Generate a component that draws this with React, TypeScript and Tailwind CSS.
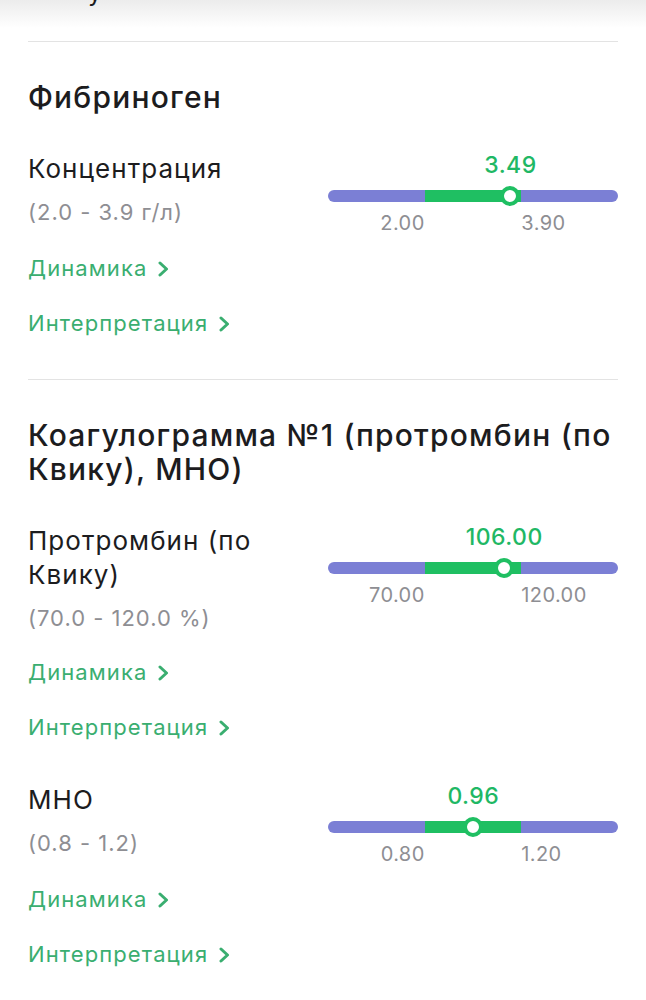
type Metric = {
  name: string;
  range: string;
  value: number;
  min: number;
  max: number;
};

type Section = {
  title: string;
  metrics: Metric[];
};

const sections: Section[] = [
  {
    title: 'Фибриноген',
    metrics: [{ name: 'Концентрация', range: '(2.0 - 3.9 г/л)', value: 3.49, min: 2, max: 3.9 }],
  },
  {
    title: 'Коагулограмма №1 (протромбин (по Квику), МНО)',
    metrics: [
      { name: 'Протромбин (по Квику)', range: '(70.0 - 120.0 %)', value: 106, min: 70, max: 120 },
      { name: 'МНО', range: '(0.8 - 1.2)', value: 0.96, min: 0.8, max: 1.2 },
    ],
  },
];

const TRACK = 290;

function RangeBar({ metric }: { metric: Metric }) {
  // normal range sits in the middle third of the track
  const third = TRACK / 3;
  const frac = Math.min(1, Math.max(0, (metric.value - metric.min) / (metric.max - metric.min)));
  const thumbLeft = third + frac * third;

  return (
    <div className="w-[290px] shrink-0 pb-[19px]">
      <div className="relative h-[26px]">
        <span
          className="absolute top-0 -translate-x-1/2 text-[23px] leading-[26px] font-medium tracking-[0.02em] text-[#1fb865] whitespace-nowrap"
          style={{ left: thumbLeft + 10 }}
        >
          {metric.value.toFixed(2)}
        </span>
      </div>
      <div className="relative mt-[12px] flex h-[12px]">
        <div className="flex-1 rounded-l-full bg-[#7b7fd5]" />
        <div className="flex-1 bg-[#1fbf62]" />
        <div className="flex-1 rounded-r-full bg-[#7b7fd5]" />
        <div
          className="absolute top-1/2 -translate-y-1/2 w-[20px] h-[20px] rounded-full bg-white border-[4px] border-[#1fbf62]"
          style={{ left: thumbLeft }}
        />
      </div>
      <div className="mt-[9px] grid grid-cols-3 text-[20px] leading-[24px] tracking-[0.02em] text-[#8e8e93]">
        <span className="text-right">{metric.min.toFixed(2)}</span>
        <span />
        <span className="text-left">{metric.max.toFixed(2)}</span>
      </div>
    </div>
  );
}

function Chevron() {
  return (
    <svg width="12" height="16" viewBox="0 0 12 16" fill="none" className="mt-[1px]">
      <path d="M3 2 L9.5 8 L3 14" stroke="currentColor" strokeWidth="3" strokeLinecap="round" strokeLinejoin="round" />
    </svg>
  );
}

function LinkRow({ label }: { label: string }) {
  return (
    <a className="flex items-center gap-[10px] text-[22px] leading-[28px] tracking-[0.05em] text-[#3aae70]">
      {label}
      <Chevron />
    </a>
  );
}

function MetricBlock({ metric }: { metric: Metric }) {
  return (
    <div>
      <div className="flex items-start justify-between">
        <div className="w-[260px] pb-[26px]">
          <p className="text-[26px] leading-[34px] tracking-[0.04em] text-[#1c1c1e]">{metric.name}</p>
          <p className="mt-[12px] text-[22px] leading-[28px] tracking-[0.045em] text-[#8e8e93]">{metric.range}</p>
        </div>
        <RangeBar metric={metric} />
      </div>
      <div className="flex flex-col gap-[27px]">
        <LinkRow label="Динамика" />
        <LinkRow label="Интерпретация" />
      </div>
    </div>
  );
}

export default function App() {
  return (
    <div className="min-h-screen bg-white font-['Inter','Noto_Sans',sans-serif]">
      <div className="h-[28px] overflow-hidden bg-gradient-to-b from-[#ececec] to-white">
        <p className="-mt-[22px] pl-[88px] text-[25px] leading-[28px] text-[#1c1c1e]">у</p>
      </div>
      <div className="px-[28px] pt-[13px]">
        {sections.map((section) => (
          <section key={section.title} className="border-t border-[#e3e3e3] pt-[38px] pb-[42px]">
            <h2 className="text-[30px] leading-[34px] font-medium tracking-[0.04em] text-[#1c1c1e]">
              {section.title}
            </h2>
            <div className="mt-[38px] flex flex-col gap-[42px]">
              {section.metrics.map((m) => (
                <MetricBlock key={m.name} metric={m} />
              ))}
            </div>
          </section>
        ))}
      </div>
    </div>
  );
}
